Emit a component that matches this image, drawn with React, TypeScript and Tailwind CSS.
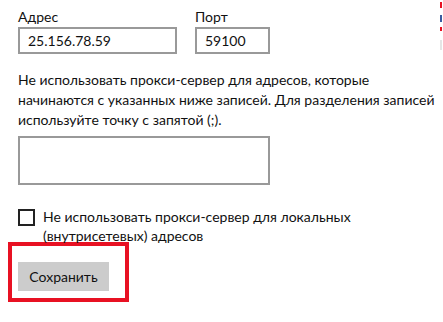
import React from "react";

export default function App() {
  return (
    <div className="relative w-[443px] h-[322px] overflow-hidden bg-white font-['Lato',sans-serif] text-[14px] text-[#111]">
      <div className="pl-[18px] pt-[8px]">
        <div className="flex gap-[18px]">
          <div className="flex flex-col">
            <label className="leading-[18px] mb-[1px]">Адрес</label>
            <div className="w-[159px] h-[27px] border-2 border-[#999] pl-[8px] leading-[23px] text-[14px]">
              25.156.78.59
            </div>
          </div>
          <div className="flex flex-col">
            <label className="leading-[18px] mb-[1px]">Порт</label>
            <div className="w-[75px] h-[27px] border-2 border-[#999] pl-[8px] leading-[23px] text-[14px]">
              59100
            </div>
          </div>
        </div>

        <p className="mt-[16px] leading-[20px]">
          Не использовать прокси-сервер для адресов, которые
          <br />
          начинаются с указанных ниже записей. Для разделения записей
          <br />
          используйте точку с запятой (;).
        </p>

        <div className="mt-[6px] w-[252px] h-[49px] border-2 border-[#999]" />

        <div className="mt-[22px] flex items-start gap-[8px]">
          <div className="mt-[2px] w-[17px] h-[17px] border-2 border-[#222] shrink-0" />
          <div className="leading-[19px]">
            Не использовать прокси-сервер для локальных
            <br />
            (внутрисетевых) адресов
          </div>
        </div>
      </div>

      <div className="ml-[8px] mt-[-3px] w-[121px] h-[60px] border-4 border-[#e81123] pl-[6px] pt-[16px]">
        <button className="w-[91px] h-[29px] bg-[#cccccc] text-[14px] leading-[29px] text-[#111] text-center">
          Сохранить
        </button>
      </div>

      <div className="absolute right-[1px] top-[2px] flex flex-col w-[2px]">
        <div className="h-[6px] bg-[#e81123]" />
        <div className="h-[7px]" />
        <div className="h-[7px] bg-[#3a5ba0]" />
        <div className="h-[5px]" />
        <div className="h-[4px] bg-[#e81123]" />
        <div className="h-[9px]" />
        <div className="h-[10px] bg-[#e5e5e5]" />
      </div>
    </div>
  );
}
